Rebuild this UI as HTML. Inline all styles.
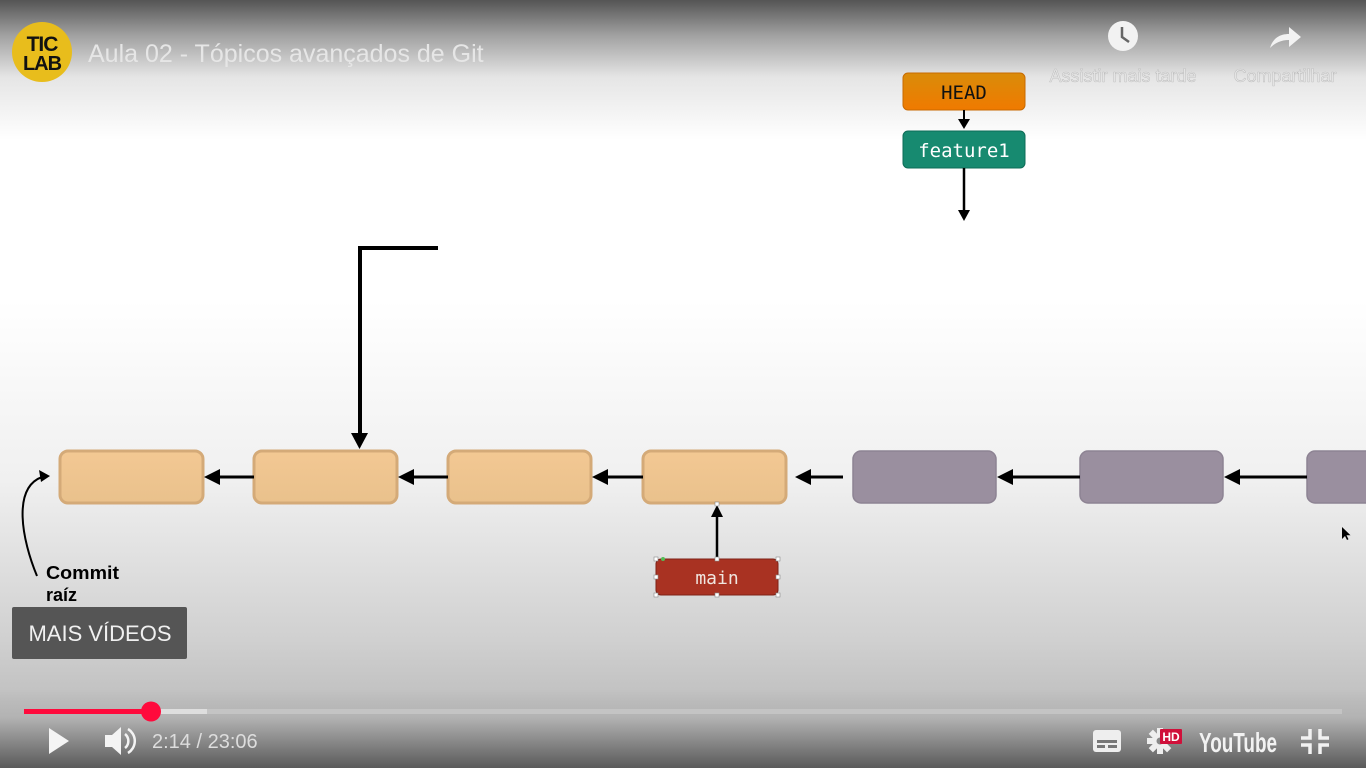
<!DOCTYPE html>
<html><head><meta charset="utf-8"><style>
html,body{margin:0;padding:0;width:1366px;height:768px;overflow:hidden}
body{background:linear-gradient(#ffffff 0px,#ffffff 300px,#f0f0f0 480px,#d0d0d0 640px,#c0c0c0 700px);font-family:"Liberation Sans",sans-serif;position:relative}
.top{position:absolute;left:0;top:0;width:1366px;height:140px;background:linear-gradient(rgba(70,70,70,0.92) 0,rgba(120,120,120,0.7) 25%,rgba(190,190,190,0.4) 55%,rgba(255,255,255,0) 100%)}
.bot{position:absolute;left:0;top:690px;width:1366px;height:78px;background:linear-gradient(rgba(180,180,180,0) 0,rgba(170,170,170,0.6) 35%,#5a5a5a 100%)}
svg{position:absolute;left:0;top:0}
</style></head><body>
<div class="top"></div>
<div class="bot"></div>
<svg width="1366" height="768" viewBox="0 0 1366 768">
<defs>
<linearGradient id="og" x1="0" y1="0" x2="0" y2="1"><stop offset="0" stop-color="#f3c893"/><stop offset="1" stop-color="#e9c18c"/></linearGradient>
<linearGradient id="hg" x1="0" y1="0" x2="0" y2="1"><stop offset="0" stop-color="#d98c0a"/><stop offset="1" stop-color="#f07a00"/></linearGradient>
</defs>
<circle cx="42" cy="52" r="30" fill="#e8bd1c"/>
<text x="42" y="51" text-anchor="middle" font-family="Liberation Sans" font-weight="bold" font-size="21" fill="#111" letter-spacing="-1">TIC</text>
<text x="42" y="70" text-anchor="middle" font-family="Liberation Sans" font-weight="bold" font-size="20" fill="#111" letter-spacing="-1">LAB</text>
<text x="88" y="62" font-family="Liberation Sans" font-size="25" fill="#e6e6e6">Aula 02 - Tópicos avançados de Git</text>
<circle cx="1123" cy="36" r="15" fill="#f2f2f2"/>
<path d="M1122 27v10l7 5" stroke="#666" stroke-width="2.5" fill="none"/>
<text x="1123" y="82" text-anchor="middle" font-size="18" fill="#e4e4e4" stroke="#aaa" stroke-width="0.3">Assistir mais tarde</text>
<path d="M1270 48c3-10 10-14 19-14v-7l12 10-12 10v-7c-8 0-14 3-19 8z" fill="#f2f2f2"/>
<text x="1285" y="82" text-anchor="middle" font-size="18" fill="#e4e4e4" stroke="#aaa" stroke-width="0.3">Compartilhar</text>
<rect x="903" y="73" width="122" height="37" rx="5" fill="url(#hg)" stroke="#c86a00"/>
<text x="964" y="99" text-anchor="middle" font-family="DejaVu Sans Mono" font-size="19" fill="#111">HEAD</text>
<line x1="964" y1="110" x2="964" y2="122" stroke="#000" stroke-width="2"/>
<path d="M958 119h12l-6 10z" fill="#000"/>
<rect x="903" y="131" width="122" height="37" rx="5" fill="#178a70" stroke="#0e6c57"/>
<text x="964" y="157" text-anchor="middle" font-family="DejaVu Sans Mono" font-size="19" fill="#fff">feature1</text>
<line x1="964" y1="168" x2="964" y2="212" stroke="#000" stroke-width="2.5"/>
<path d="M958 210h12l-6 11z" fill="#000"/>
<path d="M438 248H360V440" stroke="#000" stroke-width="4" fill="none"/>
<path d="M351 433h17l-8.5 16z" fill="#000"/>
<g stroke="#d4aa78" stroke-width="3" fill="url(#og)">
<rect x="60" y="451" width="143" height="52" rx="8"/>
<rect x="254" y="451" width="143" height="52" rx="8"/>
<rect x="448" y="451" width="143" height="52" rx="8"/>
<rect x="643" y="451" width="143" height="52" rx="8"/>
</g>
<g fill="#9a8f9f" stroke="#8d8393" stroke-width="1.5">
<rect x="853" y="451" width="143" height="52" rx="8"/>
<rect x="1080" y="451" width="143" height="52" rx="8"/>
<rect x="1307" y="451" width="80" height="52" rx="8"/>
</g>
<g stroke="#000" stroke-width="3">
<line x1="215" y1="477" x2="254" y2="477"/>
<line x1="409" y1="477" x2="448" y2="477"/>
<line x1="603" y1="477" x2="643" y2="477"/>
<line x1="808" y1="477" x2="843" y2="477"/>
<line x1="1010" y1="477" x2="1080" y2="477"/>
<line x1="1237" y1="477" x2="1307" y2="477"/>
</g>
<g fill="#000">
<path d="M204 477l16-8v16z"/><path d="M398 477l16-8v16z"/><path d="M592 477l16-8v16z"/>
<path d="M795 477l16-8v16z"/><path d="M997 477l16-8v16z"/><path d="M1224 477l16-8v16z"/>
</g>
<line x1="717" y1="516" x2="717" y2="559" stroke="#000" stroke-width="2.5"/>
<path d="M711 517h12l-6-12z" fill="#000"/>
<rect x="656" y="559" width="122" height="36" rx="5" fill="#a93222" stroke="#7e2217"/>
<text x="717" y="584" text-anchor="middle" font-family="DejaVu Sans Mono" font-size="18" fill="#f0e6e0">main</text>
<g fill="#fff" stroke="#888" stroke-width="0.6">
<rect x="654" y="557" width="4" height="4"/><rect x="715" y="557" width="4" height="4"/><rect x="776" y="557" width="4" height="4"/>
<rect x="654" y="575" width="4" height="4"/><rect x="776" y="575" width="4" height="4"/>
<rect x="654" y="593" width="4" height="4"/><rect x="715" y="593" width="4" height="4"/><rect x="776" y="593" width="4" height="4"/>
<rect x="715" y="502" width="4" height="4"/>
</g>
<circle cx="663" cy="559" r="2" fill="#5b5"/>
<path d="M37 576C22 540 12 488 42 477" stroke="#000" stroke-width="2" fill="none"/>
<path d="M50 476l-11-6 2 12z" fill="#000"/>
<text x="46" y="579" font-size="18" font-weight="bold" fill="#000" textLength="73" lengthAdjust="spacingAndGlyphs">Commit</text>
<text x="46" y="601" font-size="18" font-weight="bold" fill="#000">raíz</text>
<rect x="12" y="607" width="175" height="52" rx="2" fill="#555"/>
<text x="100" y="641" text-anchor="middle" font-size="22" fill="#f0f0f0">MAIS VÍDEOS</text>
<rect x="24" y="709" width="1318" height="5" fill="#c4c4c4"/>
<rect x="24" y="709" width="183" height="5" fill="#dedede"/>
<rect x="24" y="709" width="127" height="5" fill="#ff0a3c"/>
<circle cx="151" cy="711.5" r="10" fill="#ff0a3c"/>
<path d="M49 728v26l20-13z" fill="#f4f4f4"/>
<path d="M105 735h7l9-8v28l-9-8h-7z" fill="#f4f4f4"/>
<path d="M125 734a9 9 0 0 1 0 14M128 729a14 14 0 0 1 0 24" stroke="#f4f4f4" stroke-width="2.5" fill="none"/>
<text x="152" y="748" font-size="20" fill="#ddd">2:14 / 23:06</text>
<rect x="1093" y="730" width="28" height="22" rx="3" fill="#eee"/>
<rect x="1097" y="740" width="20" height="3" fill="#777"/><rect x="1097" y="745" width="8" height="3" fill="#777"/><rect x="1108" y="745" width="9" height="3" fill="#777"/>
<circle cx="1160" cy="741" r="8" fill="#eee"/>
<g fill="#eee"><rect x="1157" y="728" width="6" height="26"/><rect x="1147" y="738" width="26" height="6"/><rect x="1157" y="728" width="6" height="26" transform="rotate(45 1160 741)"/><rect x="1157" y="728" width="6" height="26" transform="rotate(-45 1160 741)"/></g>
<circle cx="1160" cy="741" r="3.5" fill="#888"/>
<rect x="1160" y="729" width="22" height="15" rx="1" fill="#d0103a"/>
<text x="1171" y="741" text-anchor="middle" font-size="12" font-weight="bold" fill="#fff">HD</text>
<text x="1238" y="752" text-anchor="middle" font-size="28" font-weight="bold" fill="#f2f2f2" textLength="78" lengthAdjust="spacingAndGlyphs">YouTube</text>
<g stroke="#f2f2f2" stroke-width="3.5" fill="none">
<path d="M1310 729v9h-9M1320 729v9h9M1310 754v-9h-9M1320 754v-9h9"/>
</g>
<path d="M1342 527v12l3-3 2 4 1.5-.7-2-4h4z" fill="#000"/>
</svg>
</body></html>
